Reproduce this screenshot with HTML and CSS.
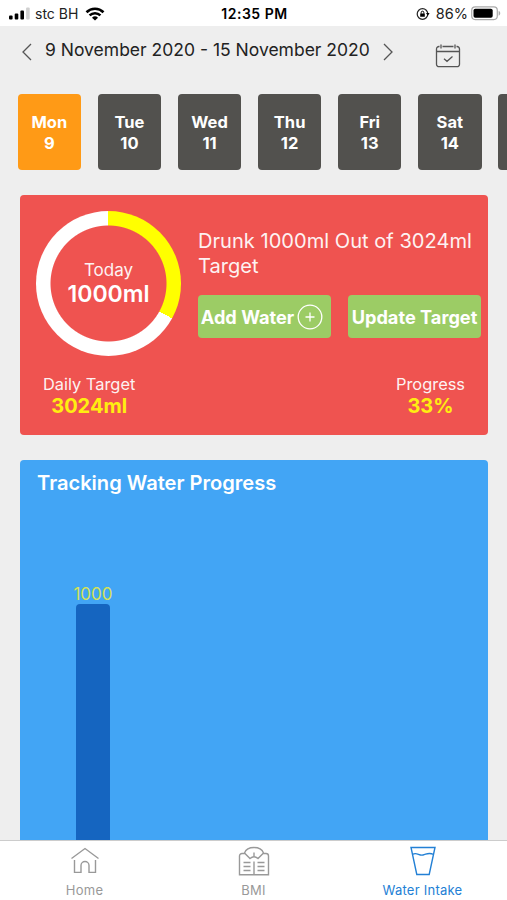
FILE: index.html
```html
<!DOCTYPE html>
<html lang="en">
 <head>
  <meta charset="utf-8">
  <meta name="viewport" content="width=device-width, initial-scale=1.0">
  <title>Water Intake</title>
  <link rel="stylesheet" href="styles.css">
 </head>
 <body>
  <div class="statusbar">
   <div class="carrier">
    <svg class="signal" width="21" height="14" viewBox="0 0 21 14">
     <rect x="0" y="8.500" width="3.600" height="4" rx="1"/>
     <rect x="5.700" y="6.500" width="3.600" height="6" rx="1"/>
     <rect x="11.400" y="3.500" width="3.600" height="9" rx="1"/>
     <rect x="17.100" y="0.500" width="3.600" height="12" rx="1" fill="#d0d0d0"/>
    </svg>
    <span class="carriername">stc BH</span>
    <svg class="wifi" width="20" height="14" viewBox="0 0 20 14">
     <path d="M1.500 5.200a12.200 12.200 0 0 1 17 0M4.600 8.400a7.800 7.800 0 0 1 10.800 0" fill="none" stroke="#000" stroke-width="2.600"/>
     <path d="M10 13.600L7 10.700a4.300 4.300 0 0 1 6 0z"/>
    </svg>
   </div>
   <div class="clock">12:35 PM</div>
   <div class="power">
    <svg class="lock" width="14" height="14" viewBox="0 0 14 14">
     <circle cx="6.500" cy="7" r="5.300" fill="none" stroke="#222" stroke-width="1.200"/>
     <path d="M10 6h3.600l-1.800 2.700zM4.200 6.500h4.600v3.300H4.200z"/>
     <path d="M5.200 6.700V5.500a1.300 1.300 0 0 1 2.600 0v1.200" fill="none" stroke="#000"/>
    </svg>
    <span class="percent">86%</span>
    <svg class="battery" width="31" height="15" viewBox="0 0 31 15">
     <rect x="0.700" y="0.900" width="25.600" height="12.700" rx="3.500" fill="#fff" stroke="#aaa" stroke-width="1.200"/>
     <rect x="2.500" y="2.700" width="19.200" height="9.100" rx="1.800"/>
     <path d="M27.600 5v4.700c2.200-.5 2.200-4.200 0-4.700z" fill="#aaa"/>
    </svg>
   </div>
  </div>

  <div class="daterange">
   <svg class="prev" width="12" height="18" viewBox="0 0 12 18"><path d="M10 1L2 9l8 8"/></svg>
   <span class="range">9 November 2020 - 15 November 2020</span>
   <svg class="next" width="12" height="18" viewBox="0 0 12 18"><path d="M1 1l8 8-8 8"/></svg>
   <svg class="calendar" width="26" height="24" viewBox="0 0 26 24">
    <path d="M4.500 2.500H4a2.500 2.500 0 0 0-2.500 2.500v15.200A2.500 2.500 0 0 0 4 22.700h18a2.500 2.500 0 0 0 2.500-2.500V5A2.500 2.500 0 0 0 22 2.500h-.5M7.500 2.500h11M1.500 7.500h23M6 .500v4M20 .500v4M9 14.800l3 2.500 5.500-4.800"/>
   </svg>
  </div>

  <div class="days">
   <div class="day active">Mon<br>9</div>
   <div class="day">Tue<br>10</div>
   <div class="day">Wed<br>11</div>
   <div class="day">Thu<br>12</div>
   <div class="day">Fri<br>13</div>
   <div class="day">Sat<br>14</div>
   <div class="day"></div>
  </div>

  <div class="card intake">
   <div class="top">
    <div class="ring">
     <div class="today">Today</div>
     <div class="amount">1000ml</div>
    </div>
    <div class="info">
     <div class="summary">Drunk 1000ml Out of 3024ml<br>Target</div>
     <div class="buttons">
      <div class="btn"><span class="add">Add Water</span>
       <svg width="26" height="26" viewBox="0 0 26 26"><circle cx="13" cy="13" r="11.800"/><path d="M13 8.500v9M8.500 13h9"/></svg>
      </div>
      <div class="btn"><span class="update">Update Target</span></div>
     </div>
    </div>
   </div>
   <div class="totals">
    <div class="total">
     <div class="label daily">Daily Target</div>
     <div class="value target">3024ml</div>
    </div>
    <div class="total">
     <div class="label progress">Progress</div>
     <div class="value pct">33%</div>
    </div>
   </div>
  </div>

  <div class="card tracking">
   <div class="title">Tracking Water Progress</div>
   <div class="chart">
    <div class="barlabel">1000</div>
    <div class="bar"></div>
   </div>
  </div>

  <div class="tabs">
   <div class="tab">
    <svg width="30" height="30" viewBox="0 0 30 30">
     <path d="M1.500 13.500L15 3.500l13.500 10M4.500 15v12.400h6.500V20.500a4 4 0 0 1 8 0v6.900h6.500V15"/>
    </svg>
    <span class="home">Home</span>
   </div>
   <div class="tab">
    <svg width="32" height="32" viewBox="0 0 32 32">
     <path d="M7 8.500H4A2.500 2.500 0 0 0 1.500 11v18.800h29V11A2.500 2.500 0 0 0 28 8.500h-3M6.500 8C8 4 12 2.500 16 2.500S24 4 25.500 8L20 13.500c-2.500-2.200-5.500-2.200-8 0zM16 11.500V7.500M16 16.500v13M5.500 17.500h7M5.500 21.500h7M5.500 25.500h7M19.500 17.500h7M19.500 21.500h7M19.500 25.500h7"/>
    </svg>
    <span class="bmi">BMI</span>
   </div>
   <div class="tab current">
    <svg width="28" height="32" viewBox="0 0 28 32">
     <path d="M2 2.500h24l-5.800 27H7.800zM3.500 9.500c4-3 6.500 1.500 10.500.5s6-3 10.500-.5"/>
    </svg>
    <span class="water">Water Intake</span>
   </div>
  </div>
 </body>
</html>
```

FILE: styles.css
```css
* {
   box-sizing: border-box;
}

body {
   margin: 0;
   height: 900px;
   overflow: hidden;
   display: flex;
   flex-direction: column;
   background-color: #eee;
   color: white;
   font-family: Inter, sans-serif;
}

svg {
   display: block;
   flex: none;
}

span {
   white-space: nowrap;
}

.statusbar {
   height: 26px;
   flex: none;
   display: grid;
   grid-template-columns: 1fr auto 1fr;
   align-items: center;
   padding: 1px 7px 0 9px;
   background-color: white;
   color: #222;
   font-size: 14px;
}

.carrier, .power {
   display: flex;
   align-items: center;
}

.carriername {
   margin: 0 7px 0 5px;
}

.clock {
   font-weight: 600;
   font-size: 14px;
   letter-spacing: .5px;
   color: black;
}

.power {
   justify-content: flex-end;
   margin-right: -2px;
}

.percent {
   margin: 0 3px 0 6px;
   font-size: 14.5px;
}

.daterange {
   height: 68px;
   flex: none;
   display: flex;
   align-items: flex-start;
   padding: 13px 0 0 21px;
   color: #222;
}

.daterange svg {
   fill: none;
   stroke: #555;
   stroke-width: 1.3;
}

.prev, .next {
   margin-top: 4px;
}

.range {
   width: 326px;
   margin: 0 12px;
   font-size: 17.5px;
   line-height: 22px;
}

.calendar {
   margin: 5px 0 0 40px;
}

.days {
   flex: none;
   display: flex;
   gap: 16.6px;
   padding-left: 17.6px;
   overflow: hidden;
}

.day {
   width: 63.5px;
   height: 76px;
   flex: none;
   padding-top: 18px;
   border-radius: 4px;
   background-color: #52514e;
   text-align: center;
   font-size: 16.5px;
   font-weight: 700;
   line-height: 21px;
}

.active {
   background-color: #ff9a16;
}

.card {
   flex: none;
   margin: 25px 19px 0 20px;
   border-radius: 4px;
}

.intake {
   height: 240px;
   background-color: #ef5350;
}

.top {
   display: flex;
   padding: 16px 0 0 16px;
}

.ring {
   width: 145px;
   height: 145px;
   flex: none;
   padding-top: 49px;
   border-radius: 50%;
   background: radial-gradient(circle, #ef5350 57.5px, transparent 58.5px), conic-gradient(yellow 33%, white 33%);
   text-align: center;
}

.today {
   font-size: 17px;
   line-height: 20px;
   opacity: .93;
}

.amount {
   font-size: 23px;
   font-weight: 600;
   line-height: 28px;
}

.info {
   padding: 18px 0 0 17px;
}

.summary {
   font-size: 20.1px;
   line-height: 25px;
   white-space: nowrap;
   opacity: .93;
}

.buttons {
   display: flex;
   gap: 17px;
   margin-top: 16px;
}

.btn {
   width: 133px;
   height: 43px;
   display: flex;
   align-items: center;
   justify-content: center;
   gap: 3px;
   border-radius: 4px;
   background-color: #9ccc65;
   font-size: 18.2px;
   font-weight: 700;
}

.btn svg {
   margin-right: 5px;
   fill: none;
   stroke: white;
   stroke-width: 1.3;
}

.totals {
   display: flex;
   justify-content: space-between;
   padding: 18px 23px 0;
   text-align: center;
}

.label {
   font-size: 16.4px;
   line-height: 20px;
   opacity: .93;
}

.value {
   color: #ffee10;
   font-size: 20px;
   font-weight: 700;
   line-height: 24px;
}

.tracking {
   flex: 1;
   min-height: 0;
   display: flex;
   flex-direction: column;
   border-radius: 4px 4px 0 0;
   background-color: #42a5f5;
}

.title {
   padding: 10px 17px 0;
   font-size: 20.1px;
   font-weight: 600;
   line-height: 26px;
}

.chart {
   flex: 1;
   width: 40px;
   display: flex;
   flex-direction: column;
   align-items: center;
   margin-left: 53px;
   padding-top: 88px;
}

.barlabel {
   color: #d4e157;
   font-size: 17px;
   line-height: 20px;
}

.bar {
   width: 34px;
   flex: 1;
   border-radius: 4px 4px 0 0;
   background-color: #1565c0;
}

.tabs {
   height: 60px;
   flex: none;
   display: grid;
   grid-template-columns: 1fr 1fr 1fr;
   border-top: 1px solid #ccc;
   background-color: white;
   color: #999;
   font-size: 13px;
   letter-spacing: .25px;
}

.tab {
   display: flex;
   flex-direction: column;
   align-items: center;
   justify-content: space-between;
   padding: 4px 0 1px;
   line-height: 18px;
}

.tab svg {
   fill: none;
   stroke: currentColor;
   stroke-width: 1.4;
}

.current {
   color: #2380d5;
}
```
